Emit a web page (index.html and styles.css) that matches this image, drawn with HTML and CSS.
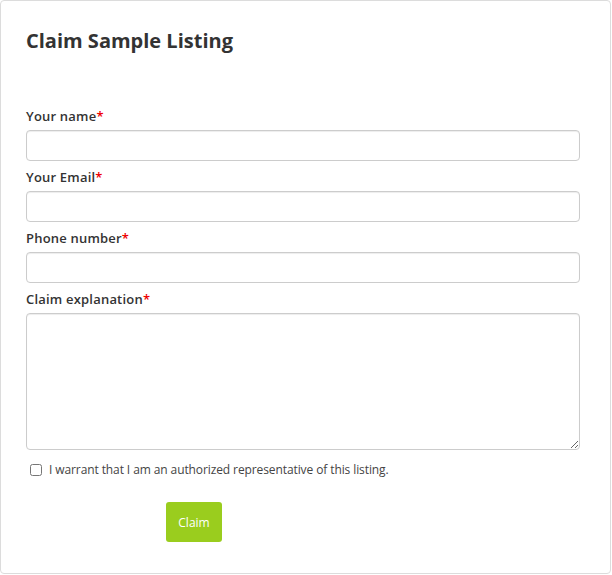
FILE: index.html
```html
<!DOCTYPE html>
<html>
<head>
<meta charset="utf-8">
<link rel="stylesheet" href="styles.css">
</head>
<body>
<div class="card">
  <h2 class="title">Claim Sample Listing</h2>
  <form class="form">
    <div class="field">
      <label class="label">Your name<span class="req">*</span></label>
      <input class="input" type="text">
    </div>
    <div class="field">
      <label class="label">Your Email<span class="req">*</span></label>
      <input class="input" type="text">
    </div>
    <div class="field">
      <label class="label">Phone number<span class="req">*</span></label>
      <input class="input" type="text">
    </div>
    <div class="field">
      <label class="label">Claim explanation<span class="req">*</span></label>
      <textarea class="textarea"></textarea>
    </div>
    <label class="check">
      <input type="checkbox" class="box">
      <span>I warrant that I am an authorized representative of this listing.</span>
    </label>
    <div class="actions">
      <button type="button" class="btn">Claim</button>
    </div>
  </form>
</div>
</body>
</html>
```
FILE: styles.css
```css
html, body {
  margin: 0;
  padding: 0;
  background: #fff;
}
body {
  font-family: "Open Sans", "Liberation Sans", sans-serif;
  color: #333;
}
.card {
  box-sizing: border-box;
  width: 611px;
  height: 574px;
  border: 1px solid #dcdcdc;
  border-radius: 4px;
  padding: 26px 31px 0 25px;
}
.title {
  margin: 0;
  font-size: 20px;
  font-weight: 700;
  line-height: 28px;
  color: #333;
}
.form {
  margin-top: 51px;
  display: flex;
  flex-direction: column;
}
.field {
  display: flex;
  flex-direction: column;
  margin-bottom: 6px;
}
.label {
  font-size: 13px;
  font-weight: 600;
  line-height: 20px;
  height: 20px;
  margin-bottom: 4px;
  color: #333;
  letter-spacing: 0.2px;
}
.req {
  color: #e00;
}
.input, .textarea {
  box-sizing: border-box;
  width: 554px;
  height: 31px;
  border: 1px solid #ccc;
  border-radius: 4px;
  box-shadow: inset 0 1px 1px rgba(0,0,0,0.075);
  margin: 0;
  padding: 6px 12px;
  font-family: inherit;
  font-size: 13px;
  background: #fff;
}
.textarea {
  height: 137px;
  resize: vertical;
}
.check {
  display: flex;
  align-items: center;
  margin-top: 4px;
  padding-left: 3px;
  font-size: 12px;
  color: #444;
  line-height: 20px;
  letter-spacing: -0.1px;
}
.box {
  margin: 0 7px 0 1px;
  width: 12px;
  height: 12px;
}
.actions {
  padding-left: 140px;
  margin-top: 22px;
}
.btn {
  width: 56px;
  height: 40px;
  border: none;
  border-radius: 3px;
  background: #9acd1e;
  color: #fff;
  font-family: inherit;
  font-size: 12px;
  padding: 0;
}
```
